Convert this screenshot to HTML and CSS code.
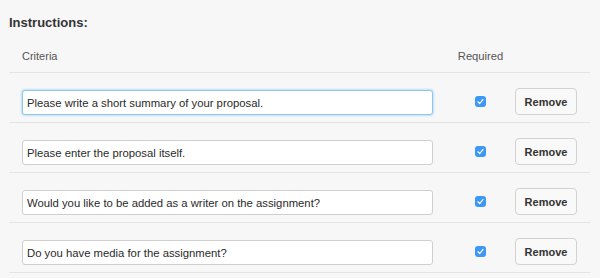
FILE: index.html
```html
<!DOCTYPE html>
<html lang="en">

<head>
    <meta charset="UTF-8">
    <meta name="viewport" content="width=device-width, initial-scale=1.0">
    <title>Instructions</title>
    <link rel="stylesheet" href="styles.css">
</head>

<body>
    <div class="page">
        <h2>Instructions:</h2>
        <div class="criteria">
            <div class="row head">
                <div class="cell first">Criteria</div>
                <div class="cell center">Required</div>
                <div class="cell"></div>
            </div>
            <div class="row">
                <div class="cell first"><input class="text focused" type="text" value="Please write a short summary of your proposal."></div>
                <div class="cell center"><span class="check"><svg viewBox="0 0 12 12" width="12" height="12"><path d="M3.2 6.3 L5.1 8.2 L8.8 3.8" fill="none" stroke="#fff" stroke-width="1.3" stroke-linecap="round" stroke-linejoin="round"/></svg></span></div>
                <div class="cell"><button>Remove</button></div>
            </div>
            <div class="row">
                <div class="cell first"><input class="text" type="text" value="Please enter the proposal itself."></div>
                <div class="cell center"><span class="check"><svg viewBox="0 0 12 12" width="12" height="12"><path d="M3.2 6.3 L5.1 8.2 L8.8 3.8" fill="none" stroke="#fff" stroke-width="1.3" stroke-linecap="round" stroke-linejoin="round"/></svg></span></div>
                <div class="cell"><button>Remove</button></div>
            </div>
            <div class="row">
                <div class="cell first"><input class="text" type="text" value="Would you like to be added as a writer on the assignment?"></div>
                <div class="cell center"><span class="check"><svg viewBox="0 0 12 12" width="12" height="12"><path d="M3.2 6.3 L5.1 8.2 L8.8 3.8" fill="none" stroke="#fff" stroke-width="1.3" stroke-linecap="round" stroke-linejoin="round"/></svg></span></div>
                <div class="cell"><button>Remove</button></div>
            </div>
            <div class="row">
                <div class="cell first"><input class="text" type="text" value="Do you have media for the assignment?"></div>
                <div class="cell center"><span class="check"><svg viewBox="0 0 12 12" width="12" height="12"><path d="M3.2 6.3 L5.1 8.2 L8.8 3.8" fill="none" stroke="#fff" stroke-width="1.3" stroke-linecap="round" stroke-linejoin="round"/></svg></span></div>
                <div class="cell"><button>Remove</button></div>
            </div>
        </div>
    </div>
</body>

</html>
```

FILE: styles.css
```css
html,
body {
    margin: 0;
    background: #f7f7f7;
}

body {
    font-family: "Liberation Sans", Arial, sans-serif;
    color: #333;
}

.page {
    padding: 15px 10px 0 9px;
}

h2 {
    margin: 0;
    font-size: 13px;
    line-height: 16px;
    font-weight: bold;
    color: #333;
}

.criteria {
    width: 581px;
}

.row {
    display: grid;
    grid-template-columns: 437px 69px 1fr;
    align-items: center;
    padding: 15px 0 7px;
    border-bottom: 1px solid #e4e4e4;
}

.row.head {
    padding: 17px 0 8px;
    font-size: 11px;
    line-height: 16px;
    color: #555;
}

.row.head .center {
    font-size: 11.2px;
}

.cell.first {
    padding-left: 13px;
    align-self: end;
    display: flex;
}

.row.head .cell.first {
    align-self: center;
}

.cell.center {
    display: flex;
    justify-content: center;
}

.text {
    box-sizing: border-box;
    width: 411px;
    height: 25px;
    padding: 0 4px;
    border: 1px solid #cfcfcf;
    border-radius: 3px;
    background: #fff;
    font-family: "Liberation Sans", Arial, sans-serif;
    font-size: 11.3px;
    color: #2a2a2a;
    outline: none;
}

.text.focused {
    border-color: #8fc6ec;
    box-shadow: 0 0 2px 1px #bfe0f7;
}

.check {
    display: flex;
    width: 11px;
    height: 11px;
    border-radius: 3px;
    background: #3d97f5;
    align-items: center;
    justify-content: center;
}

.check svg {
    width: 11px;
    height: 11px;
}

button {
    box-sizing: border-box;
    width: 62px;
    height: 27px;
    border: 1px solid #d2d2d2;
    border-radius: 4px;
    background: #f9f9f9;
    font-family: "Liberation Sans", Arial, sans-serif;
    font-size: 11px;
    font-weight: bold;
    color: #333;
    padding: 0;
}
```
